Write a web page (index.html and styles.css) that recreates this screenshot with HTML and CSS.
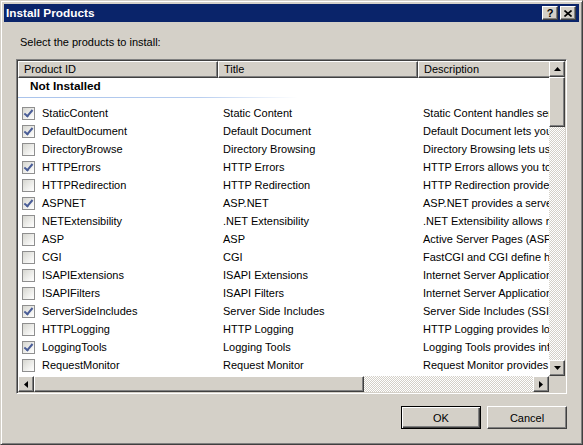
FILE: index.html
```html
<!DOCTYPE html>
<html>
<head>
<meta charset="utf-8">
<title>Install Products</title>
<link rel="stylesheet" href="styles.css">
</head>
<body>
<div class="window">
  <div class="titlebar">
    <span class="title">Install Products</span>
    <div class="tb-buttons">
      <div class="tb-btn help">?</div>
      <div class="tb-btn close">
        <svg width="8" height="7" viewBox="0 0 8 7"><path d="M0.5 0.5 L7.5 6.5 M7.5 0.5 L0.5 6.5" stroke="#000" stroke-width="1.6" fill="none"/></svg>
      </div>
    </div>
  </div>
  <div class="content">
    <div class="label">Select the products to install:</div>
    <div class="list">
      <div class="view">
        <div class="header">
          <div class="hcell c1">Product ID</div>
          <div class="hcell c2">Title</div>
          <div class="hcell c3">Description</div>
        </div>
        <div class="group">
          <div class="group-title">Not Installed</div>
          <div class="group-line"></div>
        </div>
        <div class="rows">
          <div class="row"><div class="cell c1"><span class="cb on"></span>StaticContent</div><div class="cell c2">Static Content</div><div class="cell c3">Static Content handles serving static files such as HTML pages.</div></div>
          <div class="row"><div class="cell c1"><span class="cb on"></span>DefaultDocument</div><div class="cell c2">Default Document</div><div class="cell c3">Default Document lets you configure a default file.</div></div>
          <div class="row"><div class="cell c1"><span class="cb"></span>DirectoryBrowse</div><div class="cell c2">Directory Browsing</div><div class="cell c3">Directory Browsing lets users see the contents of a directory.</div></div>
          <div class="row"><div class="cell c1"><span class="cb on"></span>HTTPErrors</div><div class="cell c2">HTTP Errors</div><div class="cell c3">HTTP Errors allows you to customize error messages.</div></div>
          <div class="row"><div class="cell c1"><span class="cb"></span>HTTPRedirection</div><div class="cell c2">HTTP Redirection</div><div class="cell c3">HTTP Redirection provides support to redirect user requests.</div></div>
          <div class="row"><div class="cell c1"><span class="cb on"></span>ASPNET</div><div class="cell c2">ASP.NET</div><div class="cell c3">ASP.NET provides a server side object oriented programming environment.</div></div>
          <div class="row"><div class="cell c1"><span class="cb"></span>NETExtensibility</div><div class="cell c2">.NET Extensibility</div><div class="cell c3">.NET Extensibility allows managed code modules.</div></div>
          <div class="row"><div class="cell c1"><span class="cb"></span>ASP</div><div class="cell c2">ASP</div><div class="cell c3">Active Server Pages (ASP) provides a server side scripting environment.</div></div>
          <div class="row"><div class="cell c1"><span class="cb"></span>CGI</div><div class="cell c2">CGI</div><div class="cell c3">FastCGI and CGI define how a Web server passes information.</div></div>
          <div class="row"><div class="cell c1"><span class="cb"></span>ISAPIExtensions</div><div class="cell c2">ISAPI Extensions</div><div class="cell c3">Internet Server Application Programming Interface (ISAPI) extensions.</div></div>
          <div class="row"><div class="cell c1"><span class="cb"></span>ISAPIFilters</div><div class="cell c2">ISAPI Filters</div><div class="cell c3">Internet Server Application Programming Interface (ISAPI) filters.</div></div>
          <div class="row"><div class="cell c1"><span class="cb on"></span>ServerSideIncludes</div><div class="cell c2">Server Side Includes</div><div class="cell c3">Server Side Includes (SSI) is a scripting language.</div></div>
          <div class="row"><div class="cell c1"><span class="cb"></span>HTTPLogging</div><div class="cell c2">HTTP Logging</div><div class="cell c3">HTTP Logging provides logging of Web site activity.</div></div>
          <div class="row"><div class="cell c1"><span class="cb on"></span>LoggingTools</div><div class="cell c2">Logging Tools</div><div class="cell c3">Logging Tools provides infrastructure to manage Web server logs.</div></div>
          <div class="row"><div class="cell c1"><span class="cb"></span>RequestMonitor</div><div class="cell c2">Request Monitor</div><div class="cell c3">Request Monitor provides infrastructure to monitor Web applications.</div></div>
          <div class="row"><div class="cell c1"><span class="cb"></span>Tracing</div><div class="cell c2">Tracing</div><div class="cell c3">Tracing provides infrastructure to diagnose and troubleshoot.</div></div>
        </div>
      </div>
      <div class="vscroll">
        <div class="sbtn"><svg width="7" height="4" viewBox="0 0 7 4"><path d="M3.5 0 L7 4 L0 4 Z" fill="#000"/></svg></div>
        <div class="thumb vthumb"></div>
        <div class="track"></div>
        <div class="sbtn"><svg width="7" height="4" viewBox="0 0 7 4"><path d="M0 0 L7 0 L3.5 4 Z" fill="#000"/></svg></div>
      </div>
      <div class="hscroll">
        <div class="sbtn"><svg width="4" height="7" viewBox="0 0 4 7"><path d="M0 3.5 L4 0 L4 7 Z" fill="#000"/></svg></div>
        <div class="thumb hthumb"></div>
        <div class="track"></div>
        <div class="sbtn"><svg width="4" height="7" viewBox="0 0 4 7"><path d="M0 0 L4 3.5 L0 7 Z" fill="#000"/></svg></div>
      </div>
      <div class="corner"></div>
    </div>
    <div class="buttons">
      <div class="btn default">OK</div>
      <div class="btn">Cancel</div>
    </div>
  </div>
</div>
</body>
</html>
```

FILE: styles.css
```css
html, body {
  margin: 0;
  padding: 0;
  background: #d4d0c8;
}

body {
  font-family: "Liberation Sans", Arial, sans-serif;
  font-size: 11px;
  color: #000;
}

.window {
  box-sizing: border-box;
  width: 583px;
  height: 445px;
  background: #d4d0c8;
  border: 1px solid;
  border-color: #d4d0c8 #404040 #404040 #d4d0c8;
  box-shadow: inset 1px 1px #fff, inset -1px -1px #808080;
  padding: 3px;
  display: flex;
  flex-direction: column;
}

.titlebar {
  height: 18px;
  flex: none;
  background: #0a246a;
  color: #fff;
  display: flex;
  align-items: center;
  padding: 0 3px 0 2px;
}

.title {
  font-weight: bold;
  font-size: 11.8px;
  line-height: 13px;
}

.tb-buttons {
  margin-left: auto;
  display: flex;
  gap: 2px;
}

.tb-btn,
.sbtn,
.thumb {
  box-sizing: border-box;
  background: #d4d0c8;
  border: 1px solid;
  border-color: #fff #404040 #404040 #fff;
  box-shadow: inset -1px -1px #808080;
}

.tb-btn {
  width: 16px;
  height: 14px;
  display: flex;
  align-items: center;
  justify-content: center;
  color: #000;
  font-weight: bold;
  font-size: 11px;
  line-height: 12px;
}

.tb-btn svg {
  display: block;
}

.content {
  flex: 1;
  display: flex;
  flex-direction: column;
  padding: 0 12px;
}

.label {
  margin-top: 14px;
  line-height: 13px;
  padding-left: 4px;
}

.list {
  margin-top: 10px;
  box-sizing: border-box;
  height: 335px;
  border: 1px solid;
  border-color: #808080 #fff #fff #808080;
  box-shadow: inset 1px 1px #404040, inset -1px -1px #d4d0c8;
  padding: 1px;
  display: grid;
  grid-template-columns: 1fr 16px;
  grid-template-rows: 1fr 16px;
  background: #fff;
}

.view {
  grid-column: 1;
  grid-row: 1;
  overflow: hidden;
  background: #fff;
  min-width: 0;
}

.header {
  display: flex;
  height: 17px;
}

.hcell {
  flex: none;
  box-sizing: border-box;
  height: 17px;
  background: #d4d0c8;
  border: 1px solid;
  border-color: #fff #404040 #404040 #fff;
  box-shadow: inset -1px -1px #808080;
  padding-left: 5px;
  line-height: 14px;
  white-space: nowrap;
}

.c1 { width: 200px; }
.c2 { width: 200px; }
.c3 { width: 320px; }

.group {
  box-sizing: border-box;
  height: 26px;
  padding-top: 2px;
}

.group-title {
  font-weight: bold;
  font-size: 11.8px;
  line-height: 13px;
  padding-left: 12px;
}

.group-line {
  margin-top: 4px;
  height: 1px;
  background: linear-gradient(to right, #a9c3eb 0, #b7cdef 180px, #ffffff 280px);
}

.row {
  display: flex;
  height: 18px;
  align-items: center;
}

.cell {
  flex: none;
  box-sizing: border-box;
  white-space: nowrap;
  overflow: hidden;
  line-height: 13px;
  padding-left: 5px;
}

.cell.c1 {
  display: flex;
  align-items: center;
  padding-left: 4px;
}

.cb {
  flex: none;
  box-sizing: border-box;
  width: 13px;
  height: 13px;
  margin-right: 7px;
  border: 1px solid #8f8f8f;
  background: linear-gradient(135deg, #d6d6d0 0%, #f4f4f2 70%, #ffffff 100%);
  position: relative;
}

.cb.on::after {
  content: "";
  position: absolute;
  left: 3px;
  top: 0px;
  width: 3px;
  height: 7px;
  border: solid #4a5d97;
  border-width: 0 2px 2px 0;
  transform: rotate(40deg);
}

.vscroll {
  grid-column: 2;
  grid-row: 1;
  display: flex;
  flex-direction: column;
}

.hscroll {
  grid-column: 1;
  grid-row: 2;
  display: flex;
}

.corner {
  grid-column: 2;
  grid-row: 2;
  background: #d4d0c8;
}

.sbtn {
  flex: none;
  width: 16px;
  height: 16px;
  display: flex;
  align-items: center;
  justify-content: center;
}

.sbtn svg {
  display: block;
}

.vthumb {
  flex: none;
  height: 50px;
  width: 16px;
}

.hthumb {
  flex: none;
  width: 330px;
  height: 16px;
}

.track {
  flex: 1;
  background-color: #fff;
  background-image: repeating-conic-gradient(#d4d0c8 0 25%, #ffffff 0 50%);
  background-size: 2px 2px;
}

.buttons {
  margin-top: 12px;
  display: flex;
  justify-content: flex-end;
  gap: 6px;
}

.btn {
  box-sizing: border-box;
  width: 80px;
  height: 23px;
  display: flex;
  align-items: center;
  justify-content: center;
  background: #d4d0c8;
  border: 1px solid;
  border-color: #fff #404040 #404040 #fff;
  box-shadow: inset -1px -1px #808080;
  font-size: 11px;
}

.btn.default {
  border: 1px solid #000;
  box-shadow: inset 1px 1px #fff, inset -1px -1px #404040, inset -2px -2px #808080;
}
```
